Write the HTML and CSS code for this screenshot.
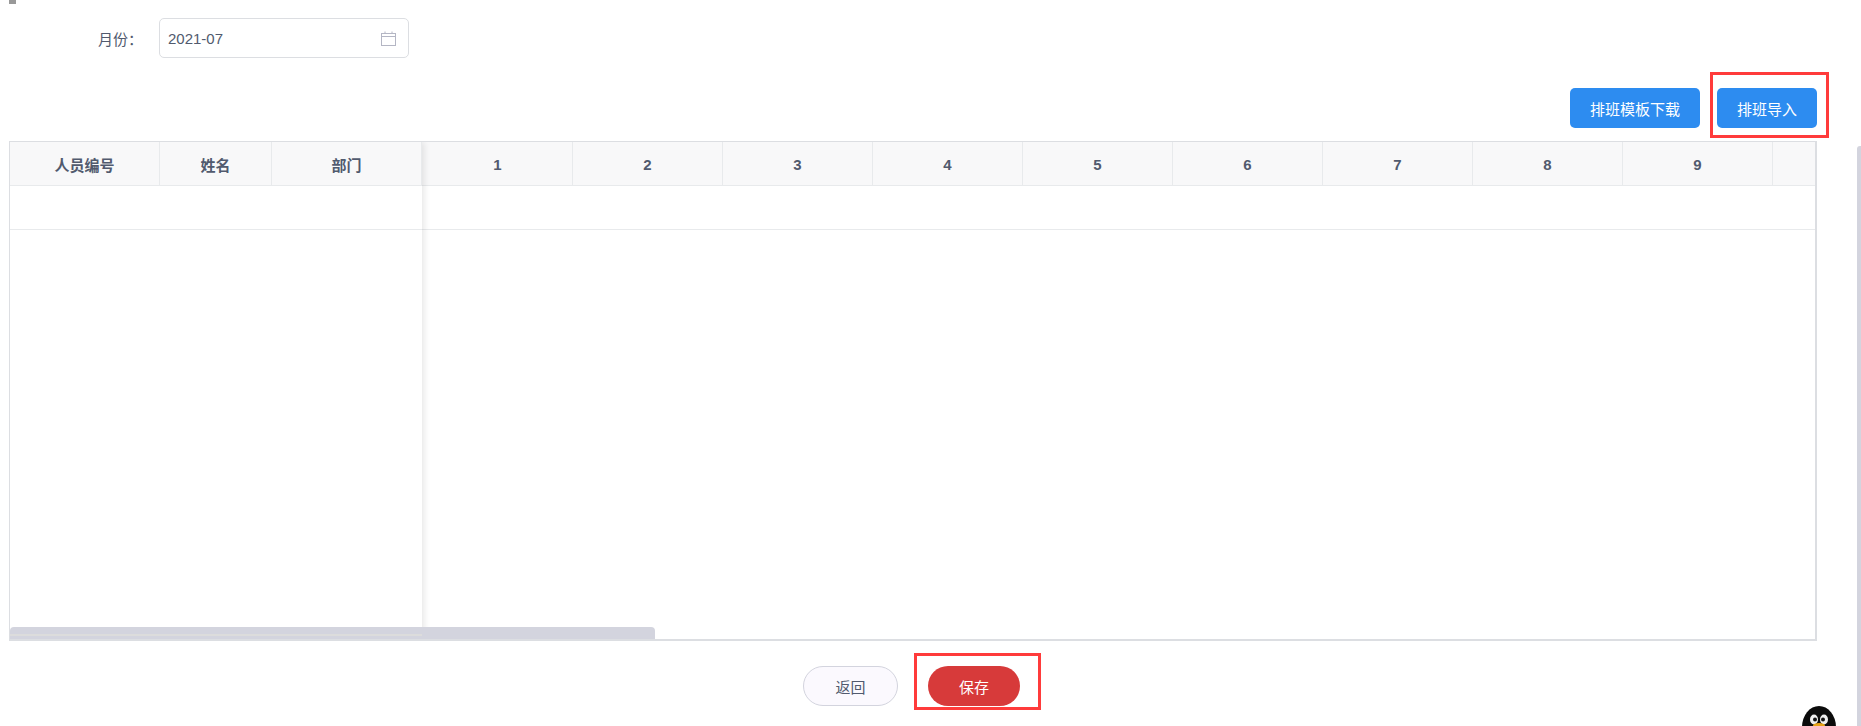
FILE: index.html
```html
<!DOCTYPE html>
<html lang="zh-CN">
<head>
    <meta charset="UTF-8">
    <title>排班导入</title>
    <link rel="stylesheet" href="styles.css">
</head>
<body>
<div class="page">
    <div class="top-mark"></div>

    <!-- Month filter -->
    <div class="form-row">
        <label class="form-label">月份：</label>
        <div class="date-input">
            <span>2021-07</span>
            <svg class="date-icon" width="15" height="15" viewBox="0 0 15 15" fill="none" stroke="#b4b6c4" stroke-width="1">
                <rect x="0.5" y="2.5" width="14" height="12"/>
                <path d="M0.5 5.5H14.5M4 0.5V2.5M11 0.5V2.5"/>
            </svg>
        </div>
    </div>

    <div class="toolbar">
        <button class="btn btn-primary btn-wide">排班模板下载</button>
        <button class="btn btn-primary btn-import">排班导入</button>
    </div>

    <!-- Schedule table -->
    <div class="table-wrap">
        <div class="table-head">
            <div class="spacer"></div>
            <div class="cell">1</div>
            <div class="cell">2</div>
            <div class="cell">3</div>
            <div class="cell">4</div>
            <div class="cell">5</div>
            <div class="cell">6</div>
            <div class="cell">7</div>
            <div class="cell">8</div>
            <div class="cell">9</div>
            <div class="cell cell-rest"></div>
        </div>
        <div class="table-row"></div>

        <div class="fixed-pane">
            <div class="table-head">
                <div class="cell cell-id">人员编号</div>
                <div class="cell cell-name">姓名</div>
                <div class="cell cell-dept">部门</div>
            </div>
            <div class="table-row"></div>
        </div>

        <div class="h-scroll-thumb"></div>
        <div class="pane-foot"></div>
    </div>

    <div class="actions">
        <button class="btn-round btn-back">返回</button>
        <button class="btn-round btn-save">保存</button>
    </div>
</div>

<!-- Red annotation boxes -->
<div class="mark mark-import"></div>
<div class="mark mark-save"></div>

<div class="page-scrollbar"></div>

<svg class="penguin" width="36" height="42" viewBox="0 0 36 42">
    <ellipse cx="18" cy="21" rx="17" ry="21" fill="#0b0b0b"/>
    <ellipse cx="13" cy="13.5" rx="4" ry="5" fill="#eee"/>
    <ellipse cx="23" cy="13.5" rx="4" ry="5" fill="#eee"/>
    <circle cx="14" cy="13.5" r="2" fill="#111"/>
    <circle cx="22" cy="13.5" r="2" fill="#111"/>
    <ellipse cx="18" cy="19.5" rx="6" ry="2.5" fill="#e8a317"/>
</svg>
</body>
</html>
```

FILE: styles.css
```css
/* General body styles */
html, body {
    height: 100%;
}

body {
    margin: 0;
    overflow: hidden;
    background: #fff;
    color: #515a6e;
    font-family: "Liberation Sans", "Noto Sans CJK SC", sans-serif;
    font-size: 15px;
}

.page {
    height: 726px;
    box-sizing: border-box;
    padding: 0 44px 0 9px;
}

.top-mark {
    width: 7px;
    height: 4px;
    background: #999;
}

/* Month filter */
.form-row {
    display: flex;
    align-items: center;
    margin-top: 14px;
    height: 40px;
}

.form-label {
    width: 150px;
    padding-right: 16px;
    box-sizing: border-box;
    text-align: right;
    white-space: nowrap;
}

.date-input {
    width: 250px;
    height: 40px;
    box-sizing: border-box;
    display: flex;
    align-items: center;
    justify-content: space-between;
    padding: 0 12px 0 8px;
    border: 1px solid #dcdee2;
    border-radius: 5px;
}

/* Buttons above the table */
.toolbar {
    display: flex;
    justify-content: flex-end;
    gap: 17px;
    margin-top: 30px;
    height: 40px;
}

.btn {
    height: 40px;
    border: none;
    border-radius: 5px;
    color: #fff;
    font: inherit;
}

.btn-primary {
    background: #2d8cf0;
}

.btn-wide {
    width: 130px;
}

.btn-import {
    width: 100px;
}

/* Schedule table */
.table-wrap {
    position: relative;
    margin-top: 13px;
    height: 500px;
    box-sizing: border-box;
    border: 1px solid #dcdee2;
    border-width: 1px 2px 2px 1px;
    overflow: hidden;
}

.table-head {
    display: flex;
    height: 44px;
    box-sizing: border-box;
    background: #f8f8f9;
    border-bottom: 1px solid #e8eaec;
}

.spacer {
    flex: none;
    width: 413px;
}

.cell {
    flex: none;
    width: 150px;
    box-sizing: border-box;
    display: flex;
    align-items: center;
    justify-content: center;
    padding-top: 1px;
    border-right: 1px solid #e8eaec;
    font-weight: bold;
}

.cell-rest {
    flex: 1;
    border-right: none;
}

.table-row {
    height: 44px;
    box-sizing: border-box;
    border-bottom: 1px solid #e8eaec;
}

/* Frozen columns lie over the scrolling part */
.fixed-pane {
    position: absolute;
    top: 0;
    left: 0;
    width: 412px;
    height: 494px;
    background: #fff;
    box-shadow: 2px 0 7px rgba(0, 0, 0, 0.1);
}

.cell-id {
    width: 150px;
}

.cell-name {
    width: 112px;
}

.cell-dept {
    width: 150px;
}

.h-scroll-thumb {
    position: absolute;
    left: 0;
    bottom: 0;
    width: 645px;
    height: 12px;
    background: #d3d4de;
    border-radius: 4px 4px 0 0;
}

.pane-foot {
    position: absolute;
    left: 0;
    top: 492px;
    width: 412px;
    height: 2px;
    background: #dcdcdc;
}

/* Bottom actions */
.actions {
    display: flex;
    justify-content: center;
    gap: 30px;
    margin-top: 25px;
    padding-right: 3px;
}

.btn-round {
    height: 40px;
    border-radius: 20px;
    font: inherit;
}

.btn-back {
    width: 95px;
    background: #fbf9fe;
    border: 1px solid #d3d4de;
    color: #515a6e;
}

.btn-save {
    width: 92px;
    background: #d73a3a;
    border: none;
    color: #fff;
}

/* Red annotation boxes */
.mark {
    position: absolute;
    box-sizing: border-box;
    border: 3px solid #ff3b3b;
}

.mark-import {
    left: 1710px;
    top: 72px;
    width: 119px;
    height: 66px;
}

.mark-save {
    left: 914px;
    top: 653px;
    width: 127px;
    height: 57px;
}

.page-scrollbar {
    position: absolute;
    left: 1857px;
    top: 146px;
    width: 4px;
    height: 580px;
    background: #d3d4de;
    border-radius: 3px 0 0 0;
}

.penguin {
    position: absolute;
    left: 1801px;
    top: 706px;
}
```
